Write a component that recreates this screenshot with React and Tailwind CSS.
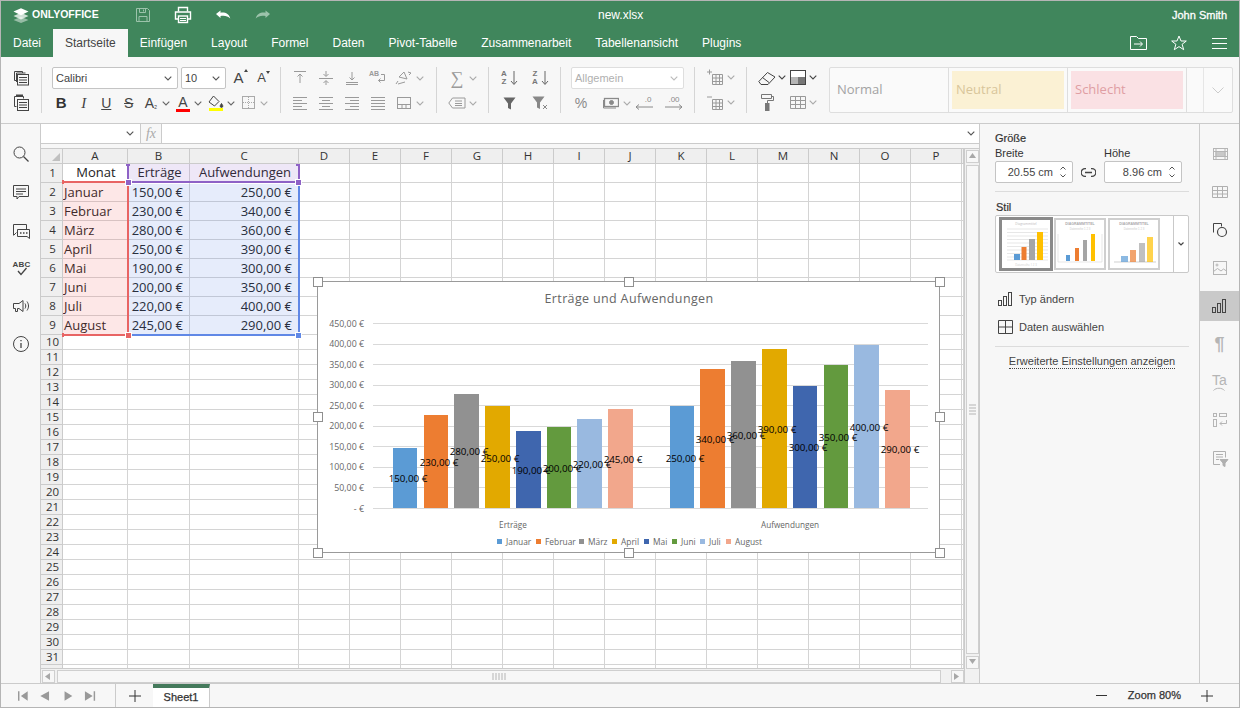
import React from "react";

const Ic = ({ children, s = 20, c = "" }) => (
  <svg width={s} height={s} viewBox="0 0 20 20" fill="none" stroke="currentColor" strokeWidth="1" className={c}>{children}</svg>
);
const Chev = ({ c = "text-[#666]" }) => (
  <svg width="8" height="5" viewBox="0 0 8 5" fill="none" stroke="currentColor" strokeWidth="1.1" className={"shrink-0 " + c}><path d="M.7.7 4 4 7.3.7" /></svg>
);

const CopyI = () => (
  <Ic><path d="M3.5 12.5v-9h8v1.5M3.5 12.5H5M5.5 5v9M5.5 5h9" /><rect x="6.5" y="6.5" width="11" height="10.5" /><path d="M8 9.5h8M8 12h8M8 14.5h8" /></Ic>
);
const PasteI = () => (
  <Ic><path d="M5.5 13.5h-2v-10h9v2" /><path d="M6 3.5V2.5h5v1" strokeWidth="2" /><rect x="6.5" y="6.5" width="11" height="11" /><path d="M8 9.5h8M8 12h8M8 14.5h8" /></Ic>
);

const Layers = () => (
  <svg width="16" height="15" viewBox="0 0 16 15">
    <path d="M8 8.8 15.5 12 8 15 .5 12z" fill="#fff" opacity=".45" />
    <path d="M8 4.8 15.5 8 8 11.5.5 8z" fill="#fff" opacity=".75" />
    <path d="M8 .2 15.5 3.6 8 7.2.5 3.6z" fill="#fff" />
  </svg>
);

function Header() {
  return (
    <div className="h-[28px] flex items-center relative text-white shrink-0">
      <div className="ml-[12px] flex items-center gap-[3px] w-[100px]">
        <Layers />
        <span className="text-[10.5px] font-bold">ONLYOFFICE</span>
      </div>
      <div className="ml-[20px] w-[20px] flex justify-center text-[#9cc3ab]">
        <Ic><path d="M3.5 3.5h11l2 2v11h-13z" /><path d="M6.5 3.5v4h6v-4M10.5 4.5v2M6 16.5v-5h8v5" /></Ic>
      </div>
      <div className="ml-[20px] w-[20px] flex justify-center">
        <Ic s={20}><path d="M5.5 6.5v-4h9v4" strokeWidth="1.4" /><path d="M5 14H2.5V7h15v7H15" strokeWidth="1.4" /><rect x="5.5" y="11" width="9" height="6.5" strokeWidth="1.4" /><path d="M7 13.5h6M7 15.5h6" /></Ic>
      </div>
      <div className="ml-[20px] w-[20px] flex justify-center">
        <svg width="16" height="10" viewBox="0 0 16 10"><path d="M1 4 5.5.5v2.2c5-.6 8.5 1.2 9.8 5.8-2.6-2.6-5.6-3.2-9.8-2.6V8z" fill="#fff" /></svg>
      </div>
      <div className="ml-[20px] w-[20px] flex justify-center">
        <svg width="16" height="10" viewBox="0 0 16 10"><path d="M15 4 10.5.5v2.2C5.500 2.100 2 3.900.7 8.500c2.600-2.600 5.600-3.200 9.800-2.600V8z" fill="#9cc3ab" /></svg>
      </div>
      <span className="absolute left-[597px] top-[7px] text-[12px] leading-[14px]">new.xlsx</span>
      <span className="absolute right-[12px] top-[8px] text-[11px] leading-[13px] [-webkit-text-stroke:0.3px_#fff]">John Smith</span>
    </div>
  );
}

function Tabs() {
  const items = ["Datei", "Startseite", "Einfügen", "Layout", "Formel", "Daten", "Pivot-Tabelle", "Zusammenarbeit", "Tabellenansicht", "Plugins"];
  return (
    <div className="h-[28px] flex text-[12px] text-white shrink-0">
      {items.map((t) => (
        <div key={t} className={"px-3 flex items-center " + (t === "Startseite" ? "bg-[#f7f7f7] text-[#444]" : "")}>{t}</div>
      ))}
      <div className="ml-auto flex items-center text-white">
        <div className="w-[18px] flex justify-center">
          <svg width="17" height="14" viewBox="0 0 17 14" fill="none" stroke="#fff"><path d="M.5.500h6l2 2h8v11H.5zM4 8h8M10 5.500 12.500 8 10 10.500" /></svg>
        </div>
        <div className="ml-[23px] w-[18px] flex justify-center">
          <svg width="16" height="16" viewBox="0 0 16 16" fill="none" stroke="#fff"><path d="M8 1l2 5h5.300l-4.200 3.300 1.600 5.400L8 11.600l-4.700 3.100 1.600-5.400L.7 6H6z" /></svg>
        </div>
        <div className="ml-[24px] mr-[12px] w-[15px] flex justify-center">
          <svg width="15" height="11" viewBox="0 0 15 11" stroke="#fff"><path d="M0 .5h15M0 5.500h15M0 10.500h15" /></svg>
        </div>
      </div>
    </div>
  );
}

const Row = ({ children, c = "" }) => <div className={"h-[22px] flex items-center " + c}>{children}</div>;
const B = ({ children, c = "w-[26px]" }) => <div className={"h-[22px] flex items-center justify-center shrink-0 " + c}>{children}</div>;
const Split = ({ children, color = "text-[#444]", chev = "text-[#666]", c = "w-[33px]" }) => (
  <div className={"h-[22px] flex items-center shrink-0 " + c}>
    <div className={"w-[22px] flex justify-center items-center relative " + color}>{children}</div>
    <div className="w-[8px] flex justify-center"><Chev c={chev} /></div>
  </div>
);
const Select = ({ children, c, text = "text-[#444]", border = "border-[#c4c4c4]", chev = "text-[#555]" }) => (
  <div className={"h-[22px] bg-white border rounded-[2px] flex items-center justify-between pl-[3px] pr-[5px] text-[11px] shrink-0 " + border + " " + c + " " + text}>
    <span>{children}</span><Chev c={chev} />
  </div>
);

const dim = "text-[#9a9a9a]";
const AlignLines = ({ k }) => {
  const m = {
    l: "M3 4.500h14M3 7.500h9M3 10.500h14M3 13.500h9M3 16.500h14",
    c: "M3 4.500h14M6 7.500h8M3 10.500h14M6 13.500h8M3 16.500h14",
    r: "M3 4.500h14M8 7.500h9M3 10.500h14M8 13.500h9M3 16.500h14",
    j: "M3 4.500h14M3 7.500h14M3 10.500h14M3 13.500h14M3 16.500h14",
  };
  return <Ic><path d={m[k]} /></Ic>;
};

function Toolbar() {
  return (
    <div className="h-[67px] border-b border-[#cbcbcb] bg-[#f7f7f7] flex pt-[10px] shrink-0">
      <div className="h-[46px] w-[41px] border-r border-[#d5d5d5] flex flex-col gap-[3px] text-[#444]">
        <B c="w-[40px]"><CopyI /></B>
        <B c="w-[40px]"><PasteI /></B>
      </div>

      <div className="h-[46px] w-[239px] border-r border-[#d5d5d5] flex flex-col gap-[3px] pl-[10px]">
        <Row>
          <Select c="w-[126px]">Calibri</Select>
          <Select c="w-[45px] ml-[3px]">10</Select>
          <B c="w-[23px] ml-[1px]"><span className="text-[15px] text-[#444] relative font-['Liberation_Sans']">A<span className="absolute -right-[4px] top-[2px] border-x-[2.500px] border-b-[3px] border-x-transparent border-b-[#444]" /></span></B>
          <B c="w-[23px]"><span className="text-[13px] text-[#444] relative">A<span className="absolute -right-[4px] top-[3px] border-x-[2.500px] border-t-[3px] border-x-transparent border-t-[#444]" /></span></B>
        </Row>
        <Row c="-ml-[2px]">
          <B c="w-[22.500px]"><span className="text-[15px] font-bold text-[#333]">B</span></B>
          <B c="w-[22.500px]"><span className="text-[15px] italic text-[#444] font-['Liberation_Serif']">I</span></B>
          <B c="w-[22.500px]"><span className="text-[14px] underline text-[#444]">U</span></B>
          <B c="w-[22.500px]"><span className="text-[14px] line-through text-[#444]">S</span></B>
          <Split c="w-[32px]"><span className="text-[14px]">A<span className="text-[8px]">₂</span></span></Split>
          <Split>
            <div className="flex flex-col items-center">
              <span className="text-[14px] leading-[14px]">A</span>
              <span className="w-[14px] h-[3px] bg-[#ff0000]" />
            </div>
          </Split>
          <Split>
            <div className="flex flex-col items-center">
              <svg width="16" height="13" viewBox="0 0 16 13" fill="none" stroke="#444"><path d="M5.500 1 11 6.500 6.500 11 1 7z" /><path d="M13.500 8.500c1 1.500 1.300 2 1.300 2.600a1.300 1.300 0 0 1-2.600 0c0-.6.300-1.100 1.300-2.600z" fill="#444" /></svg>
              <span className="w-[14px] h-[3px] bg-[#ffff00]" />
            </div>
          </Split>
          <Split color={dim} chev="text-[#aaa]">
            <svg width="14" height="14" viewBox="0 0 14 14" fill="none" stroke="#aaa"><rect x=".5" y=".5" width="12" height="12" /><path d="M6.500 1v11M1 6.500h11" strokeDasharray="1 1" /></svg>
          </Split>
        </Row>
      </div>

      <div className={"h-[46px] w-[156px] border-r border-[#d5d5d5] flex flex-col gap-[3px] pl-[6px] " + dim}>
        <Row>
          <B><Ic><path d="M4 3.500h12M10 15V6.500M7.500 8.500 10 6l2.500 2.500" /></Ic></B>
          <B><Ic><path d="M3 10.500h14M10 3v5M7.500 6 10 8.500 12.500 6M10 17v-4M7.500 15 10 12.500l2.500 2.500" /></Ic></B>
          <B><Ic><path d="M4 16.500h12M4 14.500h12M10 4v8M7.500 9.500 10 12l2.500-2.500" /></Ic></B>
          <B><div className="relative w-[20px] h-[20px]"><span className="absolute left-[1px] top-[2px] text-[7px] leading-[8px] font-bold">AB</span><svg width="20" height="20" viewBox="0 0 20 20" fill="none" stroke="currentColor" className="absolute left-0 top-0"><path d="M13 6.500h3.500v6h-6M12.500 10.500l-2 2 2 2" /></svg></div></B>
          <B><svg width="20" height="20" viewBox="0 0 20 20" fill="none" stroke="currentColor"><path d="M5 9l5-5 3 7zM4 13l-2 3M14 4l3 1-2 2" /><path d="M4 16l7-2" /></svg></B>
          <div className="w-[5px] flex justify-center"><Chev c="text-[#aaa]" /></div>
        </Row>
        <Row>
          <B><AlignLines k="l" /></B>
          <B><AlignLines k="c" /></B>
          <B><AlignLines k="r" /></B>
          <B><AlignLines k="j" /></B>
          <B><Ic><rect x="3.500" y="4.500" width="13" height="11" /><path d="M3.500 11.500h13M8 15.500v-4M12 15.500v-4" /></Ic></B>
          <div className="w-[5px] flex justify-center"><Chev c="text-[#aaa]" /></div>
        </Row>
      </div>

      <div className={"h-[46px] w-[52px] border-r border-[#d5d5d5] flex flex-col gap-[3px] pl-[8px] " + dim}>
        <Row>
          <B c="w-[24px]"><span className="text-[18px] leading-[18px] font-['Liberation_Serif']">∑</span></B>
          <div className="w-[8px] flex justify-center"><Chev c="text-[#aaa]" /></div>
        </Row>
        <Row>
          <B c="w-[24px]"><svg width="18" height="12" viewBox="0 0 18 12" fill="none" stroke="currentColor"><path d="M4.500 1H17v10H4.500L.8 6zM7 4h7M7 6.500h7M7 8.500h7" /></svg></B>
          <div className="w-[8px] flex justify-center"><Chev c="text-[#aaa]" /></div>
        </Row>
      </div>

      <div className="h-[46px] w-[72px] border-r border-[#d5d5d5] flex flex-col gap-[3px] text-[#666]">
        <Row>
          <B c="w-[36px] ml-[2px]"><div className="flex items-center"><span className="text-[8px] leading-[8.500px] font-bold text-center w-[8px] text-[#777]">A<br />Z</span><svg width="8" height="16" viewBox="0 0 8 16" fill="none" stroke="currentColor" className="ml-[2px]"><path d="M4 1v13M1 11l3 3.500L7 11" /></svg></div></B>
          <B c="w-[26px]"><div className="flex items-center"><span className="text-[8px] leading-[8.500px] font-bold text-center w-[8px] text-[#777]">Z<br />A</span><svg width="8" height="16" viewBox="0 0 8 16" fill="none" stroke="currentColor" className="ml-[2px]"><path d="M4 1v13M1 11l3 3.500L7 11" /></svg></div></B>
        </Row>
        <Row>
          <B c="w-[36px] ml-[2px]"><svg width="13" height="13" viewBox="0 0 13 13" fill="#666"><path d="M.5.500h12l-4.500 6V12.500l-3-1.500V6.500z" /></svg></B>
          <B c="w-[26px]"><svg width="16" height="14" viewBox="0 0 16 14" fill="#888"><path d="M.5.500h12l-4.500 6V13l-3-1.500v-5z" /><path d="M11 9l4 4M15 9l-4 4" stroke="#888" fill="none" /></svg></B>
        </Row>
      </div>

      <div className="h-[46px] w-[134px] border-r border-[#d5d5d5] flex flex-col gap-[3px] pl-[10px]">
        <Select c="w-[113px]" text="text-[#b0b0b0]" border="border-[#dedede]" chev="text-[#bbb]">Allgemein</Select>
        <Row c={"-ml-[1px] text-[#8a8a8a]"}>
          <B c="w-[22px]"><span className="text-[14px]">%</span></B>
          <B c="w-[20px] ml-[9px]"><svg width="16" height="12" viewBox="0 0 16 12" fill="none" stroke="currentColor"><rect x="1.500" y="1.500" width="14" height="8" strokeWidth="1.300" /><circle cx="8.500" cy="5.500" r="2" fill="currentColor" /><path d="M.5 3v8H13" /></svg></B>
          <div className="w-[9px] ml-[1px] flex justify-center"><Chev c="text-[#aaa]" /></div>
          <B c="w-[22px] ml-[2px]"><div className="flex flex-col items-center leading-[8px]"><span className="text-[8px] pl-[8px]">.0</span><svg width="18" height="6" viewBox="0 0 18 6" fill="none" stroke="currentColor"><path d="M18 3H1M4 .5 1 3l3 2.500" /></svg></div></B>
          <B c="w-[22px] ml-[8px]"><div className="flex flex-col items-center leading-[8px]"><span className="text-[8px]">.00</span><svg width="18" height="6" viewBox="0 0 18 6" fill="none" stroke="currentColor"><path d="M0 3h17M14 .5 17 3l-3 2.500" /></svg></div></B>
        </Row>
      </div>

      <div className={"h-[46px] w-[52px] border-r border-[#d5d5d5] flex flex-col gap-[3px] pl-[9px] " + dim}>
        <Row>
          <div className="w-[22px] flex justify-center"><svg width="17" height="17" viewBox="0 0 17 17" fill="none" stroke="currentColor"><path d="M5.500 5.500h10v10h-10zM5.500 9h10M5.500 12.500h10M9 5.500v10M12.500 5.500v10M0 3h5M2.500.5v5" /></svg></div>
          <div className="w-[8px] ml-[1px] flex justify-center"><Chev c="text-[#aaa]" /></div>
        </Row>
        <Row>
          <div className="w-[22px] flex justify-center"><svg width="17" height="17" viewBox="0 0 17 17" fill="none" stroke="currentColor"><path d="M5.500 5.500h10v10h-10zM5.500 9h10M5.500 12.500h10M9 5.500v10M12.500 5.500v10M0 3h5" /></svg></div>
          <div className="w-[8px] ml-[1px] flex justify-center"><Chev c="text-[#aaa]" /></div>
        </Row>
      </div>

      <div className="h-[46px] w-[82px] flex flex-col gap-[3px] pl-[9px] text-[#444]">
        <Row>
          <div className="w-[22px] flex justify-center"><svg width="18" height="14" viewBox="0 0 18 14" fill="none" stroke="#444"><path d="M6 13.500H3L.8 10.500 9.500 1.500l7.500 4.500-7 7.500zM4.500 6.500l6.500 5" /></svg></div>
          <div className="w-[8px] flex justify-center"><Chev c="text-[#444]" /></div>
          <div className="w-[16px] h-[15px] ml-[4px] border border-[#444] relative bg-white overflow-hidden">
            <span className="absolute left-0 top-[6px] w-[7px] h-[8px] bg-[#b5b5b5]" />
            <span className="absolute left-[7px] top-0 w-[8px] h-[6px] bg-white" />
            <span className="absolute left-[7px] top-[6px] w-[8px] h-[8px] bg-[#777]" />
          </div>
          <div className="w-[8px] ml-[3px] flex justify-center"><Chev c="text-[#444]" /></div>
        </Row>
        <Row>
          <div className="w-[22px] flex justify-center"><svg width="14" height="18" viewBox="0 0 14 18" fill="none" stroke="#777"><path d="M1.500 1.500h10v4h-10zM12 3.500h1.500v4h-6v3" /><rect x="5.500" y="10.500" width="3.500" height="7" fill="#777" /></svg></div>
          <div className="w-[16px] ml-[12px] flex justify-center text-[#999]"><svg width="16" height="13" viewBox="0 0 16 13" fill="none" stroke="currentColor"><path d="M.5.500h15v12H.5zM.5 4.500h15M.5 8.500h15M5.500.5v12M10.500.5v12" /></svg></div>
          <div className="w-[8px] ml-[3px] flex justify-center"><Chev c="text-[#aaa]" /></div>
        </Row>
      </div>

      <div className="h-[46px] w-[404px] bg-[#fafafa] border border-[#dedede] rounded-[2px] flex font-['Open_Sans',sans-serif] text-[13px]">
        <div className="w-[119px] border-r border-[#dedede] flex items-center pl-[7px] text-[#a3a3a3]">Normal</div>
        <div className="w-[119px] border-r border-[#dedede] p-[3px] flex"><div className="flex-1 bg-[#fbf1d4] text-[#d8c59a] flex items-center pl-[4px]">Neutral</div></div>
        <div className="w-[119px] border-r border-[#dedede] p-[3px] flex"><div className="flex-1 bg-[#fae1e4] text-[#df9ea3] flex items-center pl-[4px]">Schlecht</div></div>
        <div className="w-[17px] border-r border-[#e6e6e6]" />
        <div className="flex-1 flex items-center justify-center">
          <svg width="12" height="7" viewBox="0 0 12 7" fill="none" stroke="#ccc"><path d="M.5.500 6 6l5.500-5.500" /></svg>
        </div>
      </div>
    </div>
  );
}

function LeftBar() {
  const items = [
    <Ic key="a"><circle cx="8.500" cy="8.500" r="5.500" /><path d="m12.500 12.500 5 5" strokeWidth="1.300" /></Ic>,
    <Ic key="b"><path d="M2.500 3.500h15v11H8l-2 2.500v-2.500H2.500z" /><path d="M5 7h10M5 9.500h10M5 12h7" /></Ic>,
    <Ic key="c"><path d="M2.500 15V4.500h13v5" /><path d="M2.500 15.500l3-3" /><path d="M6.500 9.500h12v9l-2.500-2H6.500z" /><path d="M9 13h1.500M12 13h1.500M15 13h1.500" strokeWidth="1.500" /></Ic>,
    <div key="d" className="relative w-[20px] h-[20px]"><span className="absolute left-[2px] top-[2px] text-[8px] leading-[9px] font-bold tracking-[0.2px]">ABC</span><svg width="20" height="20" viewBox="0 0 20 20" fill="none" stroke="currentColor" className="absolute left-0 top-0"><path d="m7 13 3 3.500L15.500 10" strokeWidth="1.300" /></svg></div>,
    <Ic key="e"><path d="M2.500 7.500h5.500l4-3v11l-4-3h-1.500v3h-2v-3h-2z" /><path d="M14 7.500c1 1.500 1 3.500 0 5M16 5.500c2 3 2 6 0 9" /></Ic>,
    <Ic key="f"><circle cx="10" cy="10" r="7.500" /><path d="M10 9v5" strokeWidth="1.300" /><path d="M10 6v1.300" strokeWidth="1.300" /></Ic>,
  ];
  return (
    <div className="w-[40px] bg-[#f7f7f7] border-r border-[#cbcbcb] pt-[11px] text-[#444] shrink-0">
      {items.map((it, i) => (
        <div key={i} className="h-[38px] flex items-center justify-center">{it}</div>
      ))}
    </div>
  );
}

function FormulaBar() {
  return (
    <>
      <div className="h-[20px] flex border-b border-[#cbcbcb] bg-white shrink-0">
        <div className="w-[100px] flex items-center justify-end pr-[6px] border-r border-[#cbcbcb]"><Chev c="text-[#555]" /></div>
        <div className="w-[21px] bg-[#f7f7f7] border-r border-[#cbcbcb] flex items-center justify-center font-['Liberation_Serif'] italic text-[14px] text-[#aaa]">fx</div>
        <div className="flex-1 flex items-center justify-end pr-[4px]"><Chev c="text-[#555]" /></div>
      </div>
      <div className="h-[5px] bg-[#f7f7f7] border-b border-[#cbcbcb] shrink-0" />
    </>
  );
}

const COLS = ["A", "B", "C", "D", "E", "F", "G", "H", "I", "J", "K", "L", "M", "N", "O", "P", ""];
const DATA = [
  ["Monat", "Erträge", "Aufwendungen"],
  ["Januar", "150,00 €", "250,00 €"],
  ["Februar", "230,00 €", "340,00 €"],
  ["März", "280,00 €", "360,00 €"],
  ["April", "250,00 €", "390,00 €"],
  ["Mai", "190,00 €", "300,00 €"],
  ["Juni", "200,00 €", "350,00 €"],
  ["Juli", "220,00 €", "400,00 €"],
  ["August", "245,00 €", "290,00 €"],
];

function Grid() {
  const cells = [];
  cells.push(
    <div key="corner" className="bg-[#efefef] border-r border-b border-[#cbcbcb] flex items-end justify-end pr-[2px] pb-[2px]">
      <svg width="8" height="8" viewBox="0 0 8 8"><path d="M8 0v8H0z" fill="#c0c0c0" /></svg>
    </div>
  );
  COLS.forEach((c) =>
    cells.push(
      <div key={"h" + c} className="bg-[#efefef] border-r border-b border-[#cbcbcb] flex items-center justify-center text-[11.500px] text-[#333]">{c}</div>
    )
  );
  for (let r = 1; r <= 32; r++) {
    cells.push(
      <div key={"r" + r} className="bg-[#efefef] border-r border-b border-[#cbcbcb] flex items-center justify-center text-[11.500px] text-[#333] pl-[2px]">{r}</div>
    );
    COLS.forEach((c, i) => {
      const v = r <= 9 && i < 3 ? DATA[r - 1][i] : "";
      let align = "";
      if (v) {
        if (r === 1) align = "justify-center pl-[2px]";
        else if (i === 0) align = "justify-start pl-[1px] pt-[2px]";
        else align = "justify-end pr-[6px] pt-[2px]";
      }
      cells.push(
        <div key={c + r} className={"bg-white border-r border-b border-[#d4d4d4] flex items-center text-[13px] text-[#222] overflow-hidden whitespace-nowrap " + align}>{v}</div>
      );
    });
  }
  return (
    <div className="grid grid-cols-[22px_65px_62px_109px_repeat(13,51px)_2px] grid-rows-[15px_repeat(9,19px)_repeat(23,15px)] font-['Open_Sans',sans-serif]">
      {cells}
    </div>
  );
}

function Selection() {
  return (
    <>
      <div className="absolute left-[22px] top-[34px] w-[64px] h-[151px] bg-[#ef5b5b]/15" />
      <div className="absolute left-[88px] top-[15px] w-[169px] h-[18px] bg-[#8e5fc8]/15" />
      <div className="absolute left-[88px] top-[35px] w-[169px] h-[150px] bg-[#5a82e6]/15" />

      <div className="absolute left-[22px] top-[32px] w-[64px] h-[2px] bg-[#e86464]" />
      <div className="absolute left-[86px] top-[34px] w-[2px] h-[152px] bg-[#e86464]" />
      <div className="absolute left-[22px] top-[185px] w-[64px] h-[2px] bg-[#e86464]" />
      <div className="absolute left-[21px] top-[31px] w-[2px] h-[4px] bg-[#e86464]" />
      <div className="absolute left-[21px] top-[184px] w-[2px] h-[4px] bg-[#e86464]" />

      <div className="absolute left-[86px] top-[16px] w-[2px] h-[16px] bg-[#8e62c6]" />
      <div className="absolute left-[88px] top-[32px] w-[170px] h-[2px] bg-[#8e62c6]" />
      <div className="absolute left-[257px] top-[16px] w-[2px] h-[16px] bg-[#8e62c6]" />
      <div className="absolute left-[85px] top-[15px] w-[4px] h-[2px] bg-[#8e62c6]" />
      <div className="absolute left-[255px] top-[15px] w-[4px] h-[2px] bg-[#8e62c6]" />

      <div className="absolute left-[257px] top-[34px] w-[2px] h-[152px] bg-[#6088e6]" />
      <div className="absolute left-[88px] top-[185px] w-[170px] h-[2px] bg-[#6088e6]" />

      <div className="absolute left-[84px] top-[30px] w-[7px] h-[7px] bg-[#8e62c6] border border-white" />
      <div className="absolute left-[254px] top-[30px] w-[7px] h-[7px] bg-[#8e62c6] border border-white" />
      <div className="absolute left-[84px] top-[183px] w-[7px] h-[7px] bg-[#e86464] border border-white" />
      <div className="absolute left-[254px] top-[183px] w-[7px] h-[7px] bg-[#6088e6] border border-white" />
    </>
  );
}

const CL = ["#5b9bd5", "#ed7d31", "#919191", "#e2a900", "#3f66ae", "#639a3e", "#99b9e0", "#f2a78c"];
const BARS = [
  { x: 393, w: 24, v: 150, t: "150,00 €", lx: 408, ly: 478 },
  { x: 424, w: 24, v: 230, t: "230,00 €", lx: 439, ly: 462 },
  { x: 454, w: 25, v: 280, t: "280,00 €", lx: 469, ly: 451.500 },
  { x: 485, w: 25, v: 250, t: "250,00 €", lx: 500, ly: 458 },
  { x: 516, w: 25, v: 190, t: "190,00 €", lx: 531, ly: 470.500 },
  { x: 547, w: 24, v: 200, t: "200,00 €", lx: 562, ly: 468.500 },
  { x: 577, w: 25, v: 220, t: "220,00 €", lx: 592, ly: 464 },
  { x: 608, w: 25, v: 245, t: "245,00 €", lx: 623, ly: 459.500 },
  { x: 670, w: 24, v: 250, t: "250,00 €", lx: 685, ly: 458.500 },
  { x: 700, w: 25, v: 340, t: "340,00 €", lx: 715, ly: 439 },
  { x: 731, w: 25, v: 360, t: "360,00 €", lx: 746, ly: 435 },
  { x: 762, w: 25, v: 390, t: "390,00 €", lx: 777, ly: 429 },
  { x: 793, w: 24, v: 300, t: "300,00 €", lx: 808, ly: 447 },
  { x: 824, w: 24, v: 350, t: "350,00 €", lx: 838, ly: 437 },
  { x: 854, w: 25, v: 400, t: "400,00 €", lx: 869, ly: 427 },
  { x: 885, w: 25, v: 290, t: "290,00 €", lx: 900, ly: 449.500 },
];
const AXIS = [450, 400, 350, 300, 250, 200, 150, 100, 50];
const LEG = [["Januar", 497], ["Februar", 536], ["März", 579], ["April", 612], ["Mai", 644], ["Juni", 672], ["Juli", 700], ["August", 726]];

function Chart() {
  const y = (v) => 508.5 - v * 0.411;
  return (
    <div className="absolute left-[276px] top-[132px] w-[623px] h-[272px] bg-white border border-[#9a9a9a]">
      <svg width="621" height="270" viewBox="318 282 621 270" className="block font-['Open_Sans',sans-serif]">
        <text x="629" y="302.500" textAnchor="middle" fontSize="12.500" fill="#666" letterSpacing=".35">Erträge und Aufwendungen</text>
        {[...AXIS, 0].map((v) => (
          <line key={v} x1="373" x2="928" y1={Math.floor(y(v)) + 0.5} y2={Math.floor(y(v)) + 0.5} stroke="#d9d9d9" />
        ))}
        {AXIS.map((v) => (
          <text key={v} x="364" y={y(v) + 3} textAnchor="end" fontSize="8.800" fill="#666">{v},00 €</text>
        ))}
        <text x="364" y="511.500" textAnchor="end" fontSize="8.800" fill="#666">-  €</text>
        {BARS.map((b, i) => (
          <rect key={i} x={b.x} y={Math.round(y(b.v) + 0.7)} width={b.w} height={508 - Math.round(y(b.v) + 0.7)} fill={CL[i % 8]} />
        ))}
        {BARS.map((b, i) => (
          <text key={i} x={b.lx} y={b.ly + 3.5} textAnchor="middle" fontSize="9.800" fill="#000">{b.t}</text>
        ))}
        <text x="513" y="527.500" textAnchor="middle" fontSize="8.200" fill="#666">Erträge</text>
        <text x="790" y="527.500" textAnchor="middle" fontSize="8.200" fill="#666">Aufwendungen</text>
        {LEG.map(([t, x], i) => (
          <g key={t}>
            <rect x={x} y="539" width="5" height="5" fill={CL[i]} />
            <text x={x + 9} y="544.500" fontSize="8.400" fill="#666">{t}</text>
          </g>
        ))}
      </svg>
    </div>
  );
}

function Handles() {
  const h = "absolute w-[10px] h-[10px] bg-white border border-[#8f8f8f] ";
  return (
    <>
      <div className={h + "left-[272px] top-[128px]"} />
      <div className={h + "left-[583px] top-[128px]"} />
      <div className={h + "left-[894px] top-[128px]"} />
      <div className={h + "left-[272px] top-[263px]"} />
      <div className={h + "left-[894px] top-[263px]"} />
      <div className={h + "left-[272px] top-[399px]"} />
      <div className={h + "left-[583px] top-[399px]"} />
      <div className={h + "left-[894px] top-[399px]"} />
    </>
  );
}

const Tri = ({ d }) => {
  const m = { u: "M1 6 4.500 1 8 6z", d: "M1 1h7L4.500 6z", l: "M6 1v7L1 4.500z", r: "M1 1v7l5-3.500z" };
  return <svg width="9" height="9" viewBox="0 0 9 9"><path d={m[d]} fill="#a8a8a8" /></svg>;
};

function Sheet() {
  return (
    <div className="flex-1 flex min-h-0">
      <div className="w-[923px] flex flex-col">
        <div className="h-[519px] relative overflow-hidden bg-white">
          <Grid />
          <Selection />
          <Chart />
          <Handles />
        </div>
        <div className="h-[15px] bg-[#f1f1f1] border-t border-[#cbcbcb] flex items-center pl-[1px] pr-0">
          <div className="w-[13px] h-[13px] bg-[#f7f7f7] border border-[#cfcfcf] flex items-center justify-center"><Tri d="l" /></div>
          <div className="ml-[2px] w-[884px] h-[13px] bg-[#f7f7f7] border border-[#cfcfcf] flex items-center justify-center">
            <svg width="14" height="7" viewBox="0 0 14 7" stroke="#b5b5b5"><path d="M1 0v7M4 0v7M7 0v7M10 0v7M13 0v7" /></svg>
          </div>
          <div className="ml-[10px] w-[13px] h-[13px] bg-[#f7f7f7] border border-[#cfcfcf] flex items-center justify-center"><Tri d="r" /></div>
        </div>
      </div>
      <div className="w-[15px] bg-[#f1f1f1] border-l border-[#cbcbcb] flex flex-col items-center pt-[1px]">
        <div className="w-[13px] h-[13px] bg-[#f7f7f7] border border-[#cfcfcf] flex items-center justify-center"><Tri d="u" /></div>
        <div className="mt-[2px] w-[13px] h-[489px] bg-[#f7f7f7] border border-[#cfcfcf] flex items-center justify-center">
          <svg width="7" height="11" viewBox="0 0 7 11" stroke="#b5b5b5"><path d="M0 1h7M0 4h7M0 7h7M0 10h7" /></svg>
        </div>
        <div className="mt-[2px] w-[13px] h-[13px] bg-[#f7f7f7] border border-[#cfcfcf] flex items-center justify-center"><Tri d="d" /></div>
      </div>
    </div>
  );
}

const Spin = ({ children, c }) => (
  <div className={"h-[22px] bg-white border border-[#c4c4c4] rounded-[2px] flex items-center justify-end text-[11px] text-[#444] " + c}>
    <span>{children}</span>
    <div className="w-[19px] flex flex-col items-center gap-[4px]">
      <svg width="6" height="4" viewBox="0 0 6 4" fill="none" stroke="#555"><path d="M.5 3.500 3 1l2.500 2.500" /></svg>
      <svg width="6" height="4" viewBox="0 0 6 4" fill="none" stroke="#555"><path d="M.5.500 3 3 5.500.5" /></svg>
    </div>
  </div>
);

const ThumbBars = ({ bars, base = 50, stripe = false }) =>
  bars.map((b, i) => <rect key={i} x={b[0]} y={base - b[1]} width={b[2]} height={b[1]} fill={["#5b9bd5", "#ed7d31", "#a5a5a5", "#ffc000"][i]} opacity={stripe ? 0.7 : 1} />);

function Thumbs() {
  return (
    <div className="h-[58px] border border-[#c9c9c9] rounded-[2px] bg-white flex items-center pl-[3px]">
      <div className="w-[54px] h-[54px] border-[3px] border-[#8a8a8a] bg-white shrink-0">
        <svg width="48" height="48" viewBox="0 0 48 48" className="font-['Open_Sans',sans-serif]">
          <text x="24" y="5" fontSize="3.200" textAnchor="middle" fill="#bbb">Diagrammtitel</text>
          {[9, 12.500, 16, 19.500, 23, 26.500, 30, 33.500, 37, 40].map((y) => <line key={y} x1="5" x2="46" y1={y} y2={y} stroke="#ddd" strokeWidth=".7" />)}
          <ThumbBars base={40} bars={[[12, 6, 6], [19.500, 13, 5], [27, 21, 6], [35, 28, 6]]} />
          <text x="24" y="46" fontSize="2.800" textAnchor="middle" fill="#ccc">Datenreihe 1 2 3</text>
        </svg>
      </div>
      <div className="w-[52px] h-[52px] ml-[1px] border-2 border-[#cfcfcf] bg-white shrink-0">
        <svg width="48" height="48" viewBox="0 0 48 48" className="font-['Liberation_Sans',sans-serif]">
          <text x="24" y="5" fontSize="3.500" fontWeight="bold" textAnchor="middle" fill="#aaa">DIAGRAMMTITEL</text>
          <text x="24" y="10" fontSize="2.800" textAnchor="middle" fill="#ccc">Datenreihe 1 2 3</text>
          <path d="M2 14v28h44V14" fill="none" stroke="#ddd" strokeWidth=".7" />
          <ThumbBars base={41} bars={[[10, 6, 4], [19, 13, 4], [27, 21, 4], [35, 27, 4]]} />
        </svg>
      </div>
      <div className="w-[52px] h-[52px] ml-[2px] border-2 border-[#cfcfcf] bg-white shrink-0">
        <svg width="48" height="48" viewBox="0 0 48 48" className="font-['Liberation_Sans',sans-serif]">
          <text x="24" y="5" fontSize="3.500" fontWeight="bold" textAnchor="middle" fill="#aaa">DIAGRAMMTITEL</text>
          <text x="24" y="10" fontSize="2.800" textAnchor="middle" fill="#ccc">Datenreihe 1 2 3</text>
          <line x1="4" x2="46" y1="42" y2="42" stroke="#bbb" strokeWidth=".7" />
          <ThumbBars stripe base={42} bars={[[11, 6, 7], [20, 12, 6], [29, 19, 6], [37, 25, 6]]} />
        </svg>
      </div>
      <div className="ml-auto w-[15px] h-full border-l border-[#c9c9c9] flex items-center justify-center">
        <svg width="6" height="4" viewBox="0 0 6 4" fill="none" stroke="#444" strokeWidth="1.200"><path d="M.5.500 3 3 5.500.5" /></svg>
      </div>
    </div>
  );
}

const BarsIcon = () => (
  <svg width="15" height="14" viewBox="0 0 15 14" fill="none" stroke="#444"><rect x=".5" y="8.500" width="3" height="5" /><rect x="5.500" y="4.500" width="3" height="9" /><rect x="10.500" y=".5" width="3" height="13" /></svg>
);

function Panel() {
  return (
    <div className="w-[220px] bg-[#f7f7f7] border-r border-[#cbcbcb] pt-[7px] pl-[15px] pr-[10px] text-[11px] leading-[14px] text-[#333] shrink-0">
      <div className="[-webkit-text-stroke:0.2px_#333]">Größe</div>
      <div className="flex mt-[1px]"><span className="w-[109px]">Breite</span><span>Höhe</span></div>
      <div className="flex items-center mt-[1px]">
        <Spin c="w-[78px]">20.55 cm</Spin>
        <div className="w-[31px] flex justify-center">
          <svg width="15" height="9" viewBox="0 0 15 9" fill="none" stroke="#444" strokeWidth="1.300"><path d="M5 .7H4a3.800 3.800 0 0 0 0 7.600h1M10 .7h1a3.800 3.800 0 0 1 0 7.600h-1M4 4.500h7" /></svg>
        </div>
        <Spin c="w-[78px]">8.96 cm</Spin>
      </div>
      <div className="h-px bg-[#dcdcdc] mt-[8px]" />
      <div className="mt-[8px] pl-[1px] [-webkit-text-stroke:0.2px_#333]">Stil</div>
      <div className="mt-[1px]"><Thumbs /></div>
      <div className="flex items-center h-[14px] mt-[19px] pl-[3px]">
        <BarsIcon /><span className="ml-[6px] text-[#444]">Typ ändern</span>
      </div>
      <div className="flex items-center h-[14px] mt-[14px] pl-[3px]">
        <svg width="15" height="14" viewBox="0 0 15 14" fill="none" stroke="#444"><path d="M.5.500h14v13H.5zM.5 7h14M7.500.5v13" /></svg>
        <span className="ml-[6px] text-[#444]">Daten auswählen</span>
      </div>
      <div className="h-px bg-[#dcdcdc] mt-[12px]" />
      <div className="flex justify-center mt-[7px]">
        <span className="border-b border-dotted border-[#444] text-[#444]">Erweiterte Einstellungen anzeigen</span>
      </div>
    </div>
  );
}

function Rail() {
  const items = [
    <span key="1" className="text-[#b5b5b5]"><Ic><rect x="3.500" y="4.500" width="14" height="11" /><path d="M3.500 7.500h14M3.500 12.500h14M6 4.500v11M15 4.500v11" /><rect x="6" y="7.500" width="9" height="5" fill="#c9c9c9" /></Ic></span>,
    <span key="2" className="text-[#b0b0b0]"><Ic><path d="M2.500 4.500h15v11h-15zM2.500 8.500h15M2.500 12h15M7.500 4.500v11M12.500 4.500v11" /></Ic></span>,
    <span key="3" className="text-[#444]"><Ic><path d="M3.500 12.500v-9h8v3" /><circle cx="12" cy="12" r="4.500" strokeWidth="1.200" /></Ic></span>,
    <span key="4" className="text-[#b5b5b5]"><Ic><rect x="3.500" y="3.500" width="13" height="13" /><path d="m3.500 13.500 4-3 3.500 2.500 2.500-2 3 2" /><circle cx="7" cy="7" r="1" /></Ic></span>,
    <BarsIcon key="5" />,
    <span key="6" className="text-[18px] leading-[20px] font-bold text-[#b5b5b5] font-['Liberation_Sans']">¶</span>,
    <div key="7" className="flex flex-col items-center text-[#b5b5b5]">
      <span className="text-[14px] leading-[14px] font-['Liberation_Sans'] font-light">Ta</span>
      <svg width="12" height="4" viewBox="0 0 12 4" fill="none" stroke="#b5b5b5"><path d="M.5 3.500C3 .5 9 .5 11.500 3.500" /></svg>
    </div>,
    <span key="8" className="text-[#b5b5b5]"><Ic><rect x="3.500" y="3.500" width="3" height="3" /><rect x="9.500" y="3.500" width="7" height="3" /><rect x="3.500" y="9.500" width="3" height="7" /><path d="M16.500 10v3.500H10M12 11.500l-2 2 2 2" /></Ic></span>,
    <span key="9" className="text-[#b0b0b0]"><Ic><path d="M10 16.500H3.500v-13h12v6" /><path d="M6 6.500h7M6 9h7M6 11.500h3" /><path d="M10 11.500h8l-3 3.500v3.500l-2-1v-2.500z" fill="currentColor" /></Ic></span>,
  ];
  return (
    <div className="flex-1 bg-[#f7f7f7] pt-[11px]">
      {items.map((it, i) => (
        <div key={i} className="h-[38px] flex items-center">
          <div className={"w-full h-[30px] flex items-center justify-center " + (i === 4 ? "bg-[#c9c9c9]" : "")}>{it}</div>
        </div>
      ))}
    </div>
  );
}

function Bottom() {
  return (
    <div className="h-[24px] border-t border-[#cbcbcb] bg-[#f7f7f7] flex items-center shrink-0 text-[#999]">
      <div className="w-[115px] h-full border-r border-[#cbcbcb] flex items-center relative">
        <svg width="100" height="10" viewBox="0 0 100 10" className="ml-[17px]" fill="#999">
          <path d="M0 0h1.500v10H0zM10 0v10L3 5zM32 0v10l-9-5zM48 0v10l8-5zM69 0v10l8-5zM78 0h1.500v10H78z" />
        </svg>
      </div>
      <div className="w-[37px] flex justify-center text-[#444]">
        <svg width="12" height="12" viewBox="0 0 12 12" stroke="#333"><path d="M0 6h12M6 0v12" /></svg>
      </div>
      <div className="w-[57px] h-full bg-white border-r border-[#cbcbcb] border-t-[4px] border-t-[#457a5c] -mt-[1px] flex items-center justify-center text-[11px] text-[#333] [-webkit-text-stroke:0.25px_#333]">Sheet1</div>
      <div className="ml-auto flex items-center text-[#333]">
        <svg width="11" height="1" viewBox="0 0 11 1" stroke="#333"><path d="M0 .5h11" /></svg>
        <span className="ml-[21px] text-[11px] [-webkit-text-stroke:0.25px_#333]">Zoom 80%</span>
        <svg width="12" height="12" viewBox="0 0 12 12" stroke="#333" className="ml-[20px] mr-[26px]"><path d="M0 6h12M6 0v12" /></svg>
      </div>
    </div>
  );
}

export default function App() {
  return (
    <div className="w-[1240px] h-[708px] flex flex-col overflow-hidden border border-[#b5b5b5] bg-[#f7f7f7] font-['Liberation_Sans',Arial,sans-serif]">
      <div className="bg-[#40865c] shrink-0">
        <Header />
        <Tabs />
      </div>
      <Toolbar />
      <div className="flex-1 flex min-h-0">
        <LeftBar />
        <div className="w-[939px] flex flex-col border-r border-[#cbcbcb] shrink-0">
          <FormulaBar />
          <Sheet />
        </div>
        <Panel />
        <Rail />
      </div>
      <Bottom />
    </div>
  );
}
